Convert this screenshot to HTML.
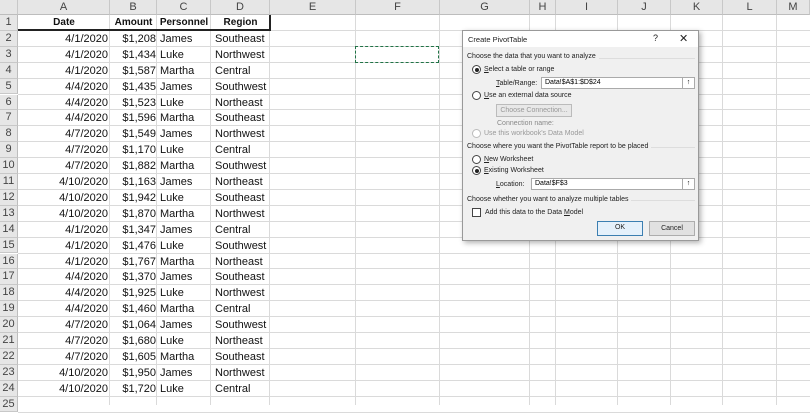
<!DOCTYPE html>
<html><head><meta charset="utf-8"><style>
*{margin:0;padding:0;box-sizing:border-box}
body{width:810px;height:405px;overflow:hidden;background:#fff;font-family:"Liberation Sans",sans-serif;position:relative}
.a{position:absolute}
.ch{top:0;height:15px;background:#e6e6e6;border-right:1px solid #c8c8c8;border-bottom:1px solid #bdbdbd;font-size:11px;color:#444;text-align:center;line-height:15px}
.rh{left:0;width:18px;background:#e6e6e6;border-bottom:1px solid #c8c8c8;border-right:1px solid #bdbdbd;font-size:11px;color:#444;text-align:center}
.vl{top:15px;width:1px;height:390px;background:#dadada}
.hl{left:18px;width:792px;height:1px;background:#dadada}
.c{font-size:11px;color:#111;white-space:nowrap;height:16px;line-height:16px}
.d{font-size:7px;color:#222;position:absolute;white-space:nowrap}
.bg{background:#f0f0f0;padding-right:3px;z-index:2}
.rad{position:absolute;width:9px;height:9px;border:1px solid #444;border-radius:50%;background:#fff}
.rad.on::after{content:"";position:absolute;left:1.5px;top:1.5px;width:4px;height:4px;border-radius:50%;background:#222}
.inp{position:absolute;height:12px;border:1px solid #aaa;background:#fff;font-size:7px;line-height:10px;padding-left:3px}
.sep{position:absolute;height:1px;background:#ddd;left:4px;width:228px}
</style></head><body>
<div class="a ch" style="left:0;width:18px;background:#e6e6e6"></div>
<div class="a ch" style="left:18px;width:92px">A</div>
<div class="a ch" style="left:110px;width:47px">B</div>
<div class="a ch" style="left:157px;width:54px">C</div>
<div class="a ch" style="left:211px;width:59px">D</div>
<div class="a ch" style="left:270px;width:86px">E</div>
<div class="a ch" style="left:356px;width:84px">F</div>
<div class="a ch" style="left:440px;width:90px">G</div>
<div class="a ch" style="left:530px;width:26px">H</div>
<div class="a ch" style="left:556px;width:62px">I</div>
<div class="a ch" style="left:618px;width:53px">J</div>
<div class="a ch" style="left:671px;width:52px">K</div>
<div class="a ch" style="left:723px;width:54px">L</div>
<div class="a ch" style="left:777px;width:33px">M</div>
<div id="grid"></div>
<script>
var cols=[110,157,211,270,356,440,530,556,618,671,723,777];
var data=[["4/1/2020","$1,208","James","Southeast"],["4/1/2020","$1,434","Luke","Northwest"],["4/1/2020","$1,587","Martha","Central"],["4/4/2020","$1,435","James","Southwest"],["4/4/2020","$1,523","Luke","Northeast"],["4/4/2020","$1,596","Martha","Southeast"],["4/7/2020","$1,549","James","Northwest"],["4/7/2020","$1,170","Luke","Central"],["4/7/2020","$1,882","Martha","Southwest"],["4/10/2020","$1,163","James","Northeast"],["4/10/2020","$1,942","Luke","Southeast"],["4/10/2020","$1,870","Martha","Northwest"],["4/1/2020","$1,347","James","Central"],["4/1/2020","$1,476","Luke","Southwest"],["4/1/2020","$1,767","Martha","Northeast"],["4/4/2020","$1,370","James","Southeast"],["4/4/2020","$1,925","Luke","Northwest"],["4/4/2020","$1,460","Martha","Central"],["4/7/2020","$1,064","James","Southwest"],["4/7/2020","$1,680","Luke","Northeast"],["4/7/2020","$1,605","Martha","Southeast"],["4/10/2020","$1,950","James","Northwest"],["4/10/2020","$1,720","Luke","Central"]];
var h="",rh=15.9;
cols.forEach(function(x){h+='<div class="a vl" style="left:'+(x-1)+'px"></div>'});
for(var r=0;r<25;r++){var y=15+r*rh;
h+='<div class="a rh" style="top:'+y+'px;height:'+rh+'px;line-height:'+rh+'px">'+(r+1)+'</div>';
h+='<div class="a hl" style="top:'+(y+rh-1)+'px"></div>';}
var hs='top:15px;text-align:center;font-weight:bold;font-size:10px';
h+='<div class="a c" style="left:18px;width:92px;'+hs+'">Date</div>';
h+='<div class="a c" style="left:110px;width:47px;'+hs+'">Amount</div>';
h+='<div class="a c" style="left:157px;width:54px;'+hs+'">Personnel</div>';
h+='<div class="a c" style="left:211px;width:59px;'+hs+'">Region</div>';
h+='<div class="a" style="left:18px;width:252px;top:29px;height:2px;background:#222"></div><div class="a" style="left:269px;width:2px;top:15px;height:16px;background:#222"></div>';
data.forEach(function(d,i){var y=15+(i+1)*rh;
h+='<div class="a c" style="left:18px;width:90px;top:'+y+'px;text-align:right">'+d[0]+'</div>';
h+='<div class="a c" style="left:110px;width:46px;top:'+y+'px;text-align:right">'+d[1]+'</div>';
h+='<div class="a c" style="left:160px;top:'+y+'px">'+d[2]+'</div>';
h+='<div class="a c" style="left:215px;top:'+y+'px">'+d[3]+'</div>';});
document.getElementById("grid").innerHTML=h;
</script>
<div class="a" style="left:355px;top:46px;width:84px;height:17px;border:1.5px dashed #217346"></div>
<div class="a" style="left:462px;top:30px;width:237px;height:211px;background:#f0f0f0;border:1px solid #999;box-shadow:2px 2px 5px rgba(0,0,0,.3)">
<div style="position:absolute;left:0;top:0;width:100%;height:16px;background:#fff"></div>
<div class="d" style="left:5px;top:4px;font-size:7.5px">Create PivotTable</div>
<div class="d" style="left:190px;top:2px;font-size:9px">?</div>
<div class="d" style="left:216px;top:1px;font-size:11px">✕</div>
<div class="sep" style="top:27px"></div>
<div class="d bg" style="left:4px;top:22px">Choose the data that you want to analyze</div>
<div class="rad on" style="left:9px;top:34px"></div><div class="d" style="left:21px;top:35px"><u>S</u>elect a table or range</div>
<div class="d" style="left:33px;top:49px"><u>T</u>able/Range:</div>
<div class="inp" style="left:78px;top:46px;width:142px">Data!$A$1:$D$24</div>
<div class="inp" style="left:219px;top:46px;width:13px;padding:0;text-align:center;font-weight:bold">↑</div>
<div class="rad" style="left:9px;top:60px"></div><div class="d" style="left:21px;top:61px"><u>U</u>se an external data source</div>
<div class="d" style="left:33px;top:73px;width:76px;height:13px;border:1px solid #bbb;background:#e8e8e8;color:#999;text-align:center;line-height:11px">Choose Connection...</div>
<div class="d" style="left:34px;top:89px;color:#888">Connection name:</div>
<div class="rad" style="left:9px;top:98px;border-color:#bbb"></div><div class="d" style="left:21px;top:99px;color:#999">Use this workbook's Data Model</div>
<div class="sep" style="top:116px"></div>
<div class="d bg" style="left:4px;top:112px">Choose where you want the PivotTable report to be placed</div>
<div class="rad" style="left:9px;top:124px"></div><div class="d" style="left:21px;top:125px"><u>N</u>ew Worksheet</div>
<div class="rad on" style="left:9px;top:135px"></div><div class="d" style="left:21px;top:136px"><u>E</u>xisting Worksheet</div>
<div class="d" style="left:33px;top:150px"><u>L</u>ocation:</div>
<div class="inp" style="left:68px;top:147px;width:152px">Data!$F$3</div>
<div class="inp" style="left:219px;top:147px;width:13px;padding:0;text-align:center;font-weight:bold">↑</div>
<div class="sep" style="top:169px"></div>
<div class="d bg" style="left:4px;top:165px">Choose whether you want to analyze multiple tables</div>
<div style="position:absolute;left:9px;top:177px;width:9px;height:9px;border:1px solid #444;background:#fff"></div>
<div class="d" style="left:22px;top:178px">Add this data to the Data <u>M</u>odel</div>
<div class="d" style="left:134px;top:190px;width:46px;height:15px;border:1.5px solid #3c7fb1;background:#e5f1fb;text-align:center;line-height:12px">OK</div>
<div class="d" style="left:186px;top:190px;width:46px;height:15px;border:1px solid #adadad;background:#e1e1e1;text-align:center;line-height:13px">Cancel</div>
</div>
</body></html>
